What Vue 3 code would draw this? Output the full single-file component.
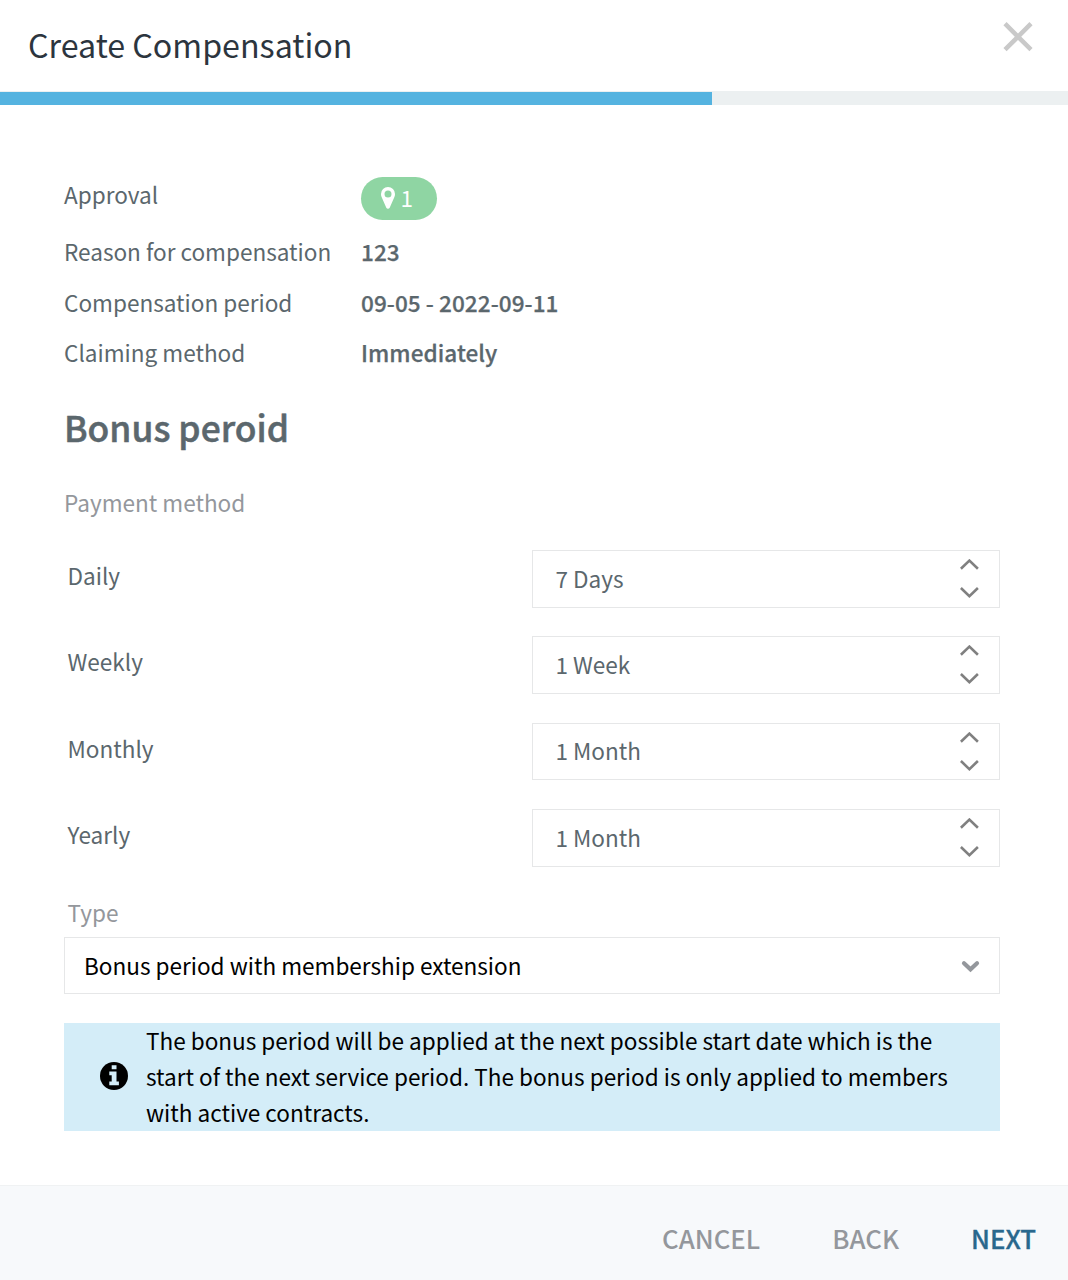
<template>
  <div class="dialog">
    <header class="dialog__header">
      <h1 class="dialog__title">Create Compensation</h1>
      <button class="dialog__close" aria-label="Close">
        <svg width="30" height="30" viewBox="0 0 30 30">
          <path d="M2 1.700L28 27.700M28 1.700L2 27.700" fill="none" stroke="#c9c9c9" stroke-width="4.500" />
        </svg>
      </button>
    </header>

    <div class="progress">
      <div class="progress__bar" :style="{ width: progress + 'px' }"></div>
    </div>

    <main class="dialog__body">
      <dl class="summary">
        <div class="summary__row summary__row--badge">
          <dt>Approval</dt>
          <dd>
            <span class="badge">
              <svg width="14" height="22" viewBox="0 0 14 22">
                <path
                  fill="#fff"
                  fill-rule="evenodd"
                  d="M7 0a7 7 0 0 1 7 7c0 1.300-.2 2.300-.7 3.300L8.700 20.700a1.900 1.900 0 0 1-3.400 0L.7 10.300C.2 9.300 0 8.300 0 7a7 7 0 0 1 7-7zm0 3.500a3.500 3.500 0 1 0 0 7 3.500 3.500 0 0 0 0-7z"
                />
              </svg>
              <span class="badge__count">1</span>
            </span>
          </dd>
        </div>
        <div v-for="item in summary" :key="item.label" class="summary__row">
          <dt>{{ item.label }}</dt>
          <dd>{{ item.value }}</dd>
        </div>
      </dl>

      <h2 class="section-title">Bonus peroid</h2>
      <p class="hint">Payment method</p>

      <div class="periods">
        <div v-for="period in periods" :key="period.label" class="period">
          <span class="period__label">{{ period.label }}</span>
          <div class="stepper">
            <span class="stepper__value">{{ period.value }}</span>
            <svg class="stepper__arrows" width="20" height="40" viewBox="0 0 20 40">
              <path
                d="M1.900 9.700L10.400 1.600L18.900 9.700M1.900 29L10.400 37.100L18.900 29"
                fill="none"
                stroke="#808080"
                stroke-width="2.600"
              />
            </svg>
          </div>
        </div>
      </div>

      <p class="hint hint--type">Type</p>
      <div class="select">
        <span class="select__value">Bonus period with membership extension</span>
        <svg class="select__arrow" width="19" height="13" viewBox="0 0 19 13">
          <path
            d="M3 3.200L9.500 9.300L16 3.200"
            fill="none"
            stroke="#94979c"
            stroke-width="4.200"
            stroke-linecap="round"
          />
        </svg>
      </div>

      <div class="info">
        <svg class="info__icon" width="28" height="28" viewBox="0 0 28 28">
          <circle cx="14" cy="14" r="14" fill="#000" />
          <path fill="#d4edf8" d="M11.700 3.200h4.800v4h-4.800zM9.300 9.600h7.200v10h2.400v3.700H9.300v-3.700h2.400v-6.400H9.300z" />
        </svg>
        <p class="info__text">
          The bonus period will be applied at the next possible start date which is the
          start of the next service period. The bonus period is only applied to members
          with active contracts.
        </p>
      </div>
    </main>

    <footer class="dialog__footer">
      <button class="action">CANCEL</button>
      <button class="action">BACK</button>
      <button class="action action--primary">NEXT</button>
    </footer>
  </div>
</template>

<script setup>
const progress = 712;

const summary = [
  { label: 'Reason for compensation', value: '123' },
  { label: 'Compensation period', value: '09-05 - 2022-09-11' },
  { label: 'Claiming method', value: 'Immediately' }
];

const periods = [
  { label: 'Daily', value: '7 Days' },
  { label: 'Weekly', value: '1 Week' },
  { label: 'Monthly', value: '1 Month' },
  { label: 'Yearly', value: '1 Month' }
];
</script>

<style>
body {
  margin: 0;
  background: #fff;
}
</style>

<style scoped>
.dialog {
  box-sizing: border-box;
  display: flex;
  flex-direction: column;
  width: 1068px;
  height: 1280px;
  overflow: hidden;
  font-family: "Noto Sans CJK SC", "Noto Sans", sans-serif;
  font-size: 22.55px;
  line-height: 36px;
  color: #5b676d;
}

h1, h2, p, dl, dd {
  margin: 0;
}

button {
  padding: 0;
  border: 0;
  background: none;
  font: inherit;
  cursor: pointer;
}

.dialog__header {
  box-sizing: border-box;
  display: flex;
  justify-content: space-between;
  align-items: flex-start;
  height: 91px;
  padding: 0 35px 0 28px;
}

.dialog__title {
  font-size: 32.2px;
  font-weight: 400;
  line-height: 89px;
  color: #2c353e;
}

.dialog__close {
  display: flex;
  margin-top: 22px;
}

.progress {
  height: 13px;
  padding-top: 1px;
  background: #ecf0f1;
}

.progress__bar {
  height: 13px;
  background: #55b3e0;
}

.dialog__body {
  flex: 1;
  padding: 71px 68px 0 64px;
}

.summary__row {
  display: flex;
  height: 50.5px;
}

.summary__row--badge {
  height: 57px;
}

.summary dt {
  width: 297px;
}

.summary dd {
  font-weight: 500;
  letter-spacing: 0.05px;
  -webkit-text-stroke: 0.25px currentColor;
}

.badge {
  box-sizing: border-box;
  display: flex;
  align-items: center;
  gap: 5.5px;
  width: 76px;
  height: 43px;
  margin-top: 1px;
  padding: 0 0 1px 20px;
  border-radius: 22px;
  background: #8fd5a3;
  color: #fff;
  font-weight: 400;
  -webkit-text-stroke: 0;
}

.badge__count {
  padding-bottom: 2px;
}

.section-title {
  margin-top: 18px;
  font-size: 35.4px;
  font-weight: 500;
  line-height: 48px;
  -webkit-text-stroke: 0.5px currentColor;
}

.hint {
  margin-top: 33px;
  color: #94979c;
}

.periods {
  display: grid;
  row-gap: 28.7px;
  margin-top: 30.4px;
}

.period {
  display: grid;
  grid-template-columns: 468px 468px;
}

.period__label {
  padding: 7px 0 0 3.5px;
}

.stepper {
  box-sizing: border-box;
  display: flex;
  justify-content: space-between;
  height: 57.7px;
  padding: 8px 20px 0 22.5px;
  border: 1px solid #e6e7e8;
}

.stepper__value {
  padding-top: 0.7px;
}

.hint--type {
  margin: 27px 0 7px 3.5px;
}

.select {
  box-sizing: border-box;
  display: flex;
  justify-content: space-between;
  align-items: center;
  height: 57px;
  padding: 0 19px;
  border: 1px solid #e6e7e8;
  color: #000;
}

.select__arrow {
  margin-top: 2px;
}

.info {
  display: flex;
  align-items: center;
  gap: 18px;
  height: 108px;
  margin-top: 29px;
  padding: 0 36px;
  background: #d4edf8;
  color: #000;
}

.info__icon {
  flex: none;
  margin-bottom: 1px;
}

.info__text {
  margin-top: -2px;
}

.dialog__footer {
  box-sizing: border-box;
  display: flex;
  justify-content: flex-end;
  gap: 72px;
  height: 95px;
  padding: 0 32px 0 0;
  border-top: 1px solid #f0f2f3;
  background: #f7f9fb;
}

.action {
  height: 103px;
  font-size: 25.8px;
  font-weight: 500;
  color: #94979c;
}

.action--primary {
  color: #29688d;
  -webkit-text-stroke: 0.3px currentColor;
}
</style>
